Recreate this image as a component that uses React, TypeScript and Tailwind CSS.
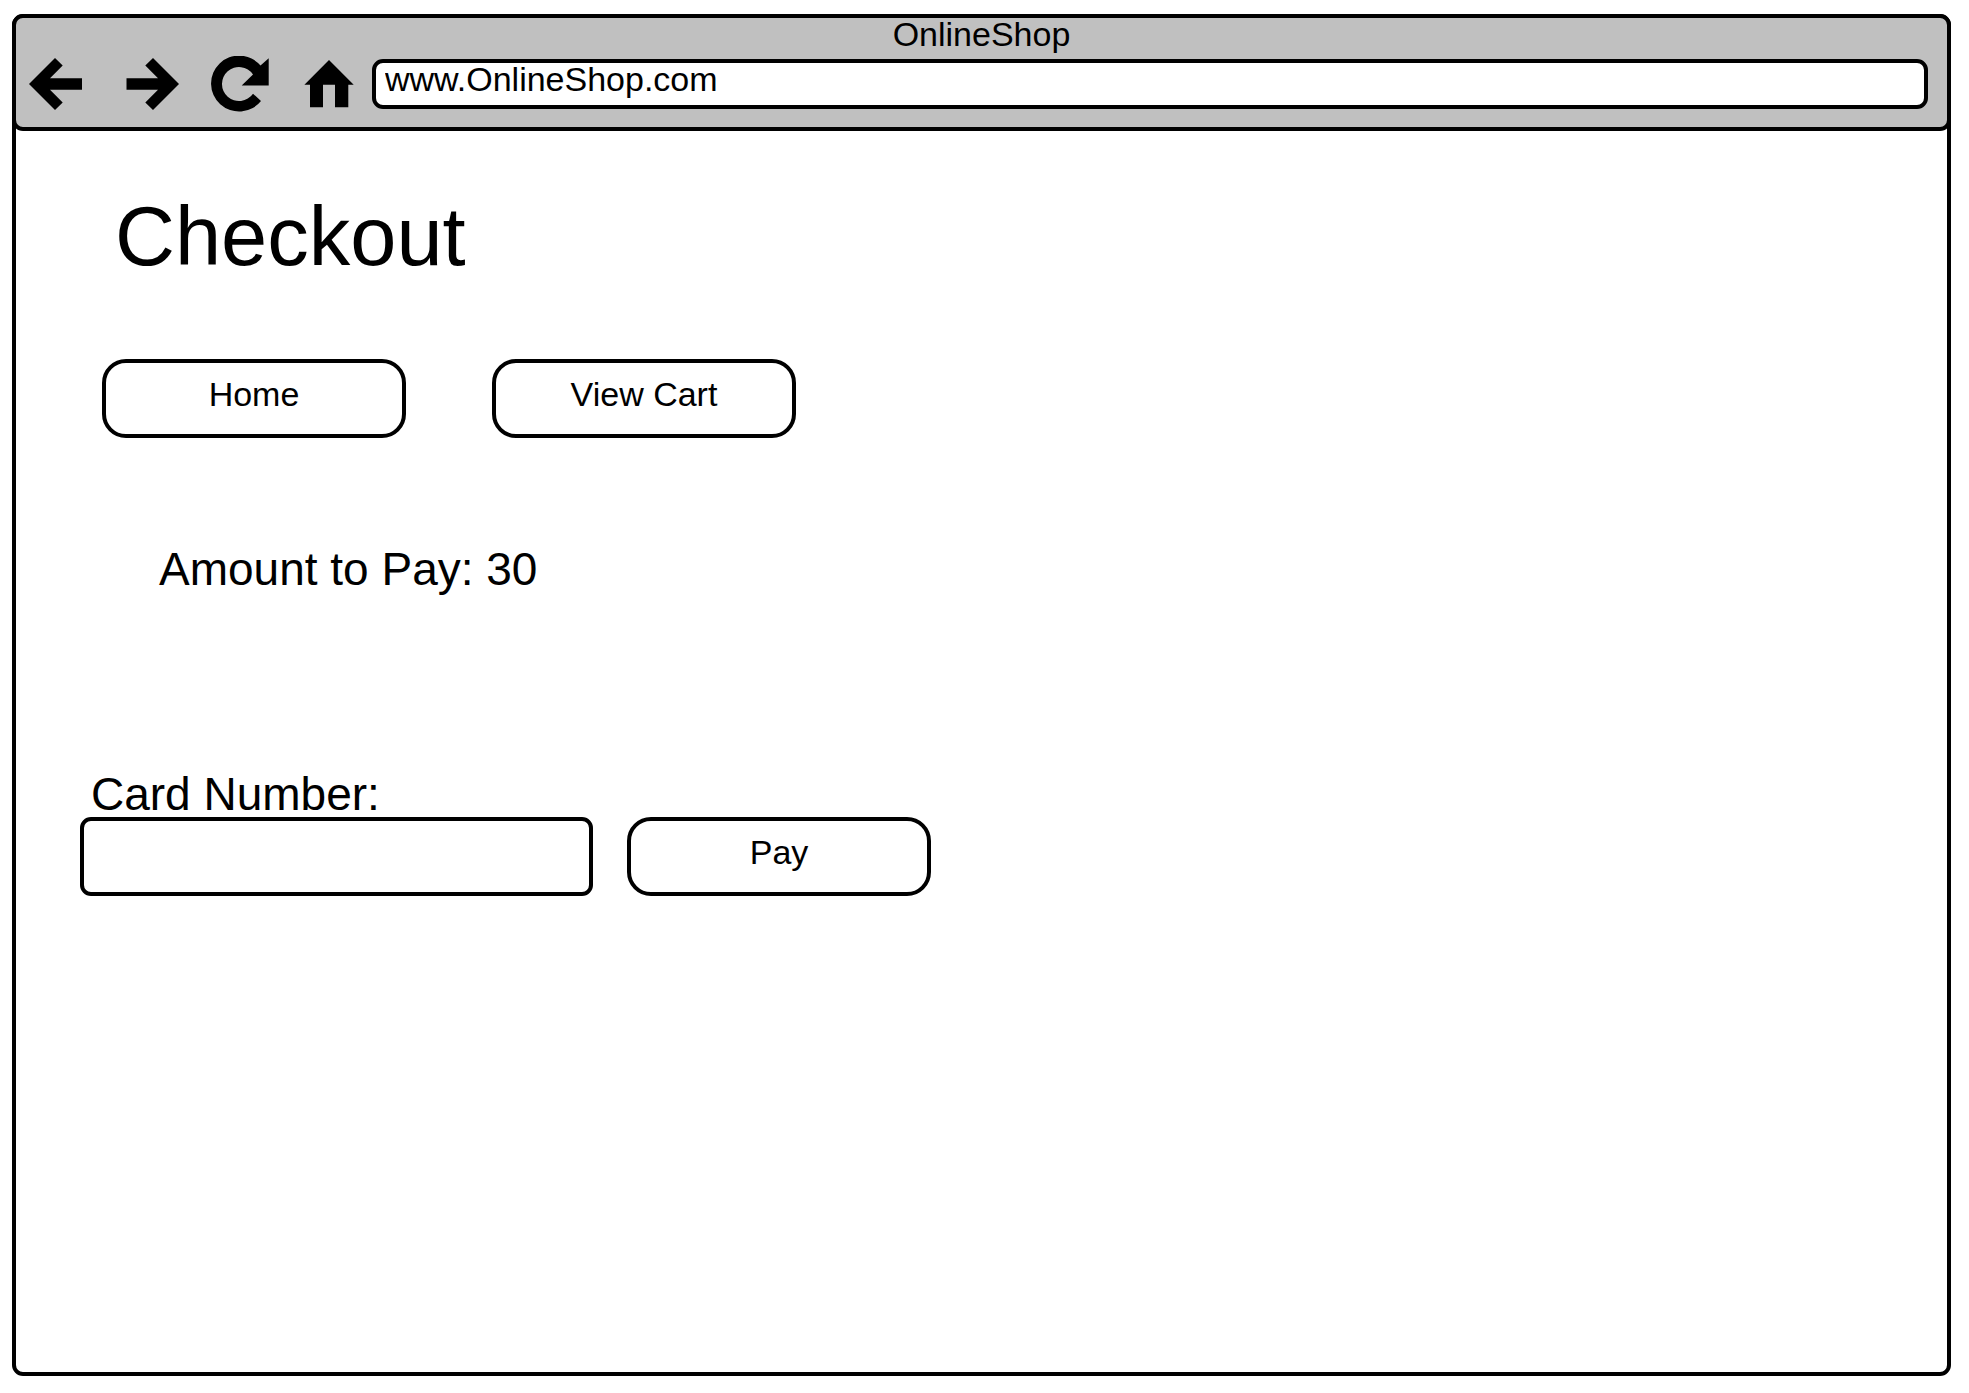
import type { ReactNode } from "react";

function IconButton({ label, children }: { label: string; children: ReactNode }) {
  return (
    <button type="button" aria-label={label} className="shrink-0 cursor-pointer">
      {children}
    </button>
  );
}

function BackIcon() {
  return (
    <svg width="53" height="52" viewBox="0 0 53 52" className="block fill-black">
      <path d="M0 26 26 0 33.7 7.5 21 20.3H53V31.7H21L33.7 44.5 26 52Z" />
    </svg>
  );
}

function ForwardIcon() {
  return (
    <svg width="53" height="52" viewBox="0 0 53 52" className="block fill-black">
      <path d="M53 26 27 0 19.3 7.5 32 20.3H.5V31.7H32L19.3 44.5 27 52Z" />
    </svg>
  );
}

function ReloadIcon() {
  return (
    <svg width="58" height="56" viewBox="0 0 58 56" className="block fill-black">
      <path d="M49.5 9.6 57.7 2.3V29.5H30.7L42 18.5A17 17 0 1 0 42 37.7L50 45A28 28 0 1 1 49.5 9.6Z" />
    </svg>
  );
}

function HomeIcon() {
  return (
    <svg width="50" height="48" viewBox="0 0 50 48" className="block fill-black">
      <path d="M25 0 49.7 24.8H44.3V47.3H31V24.8H19V47.3H6V24.8H.4Z" />
    </svg>
  );
}

function ActionButton({ type = "button", children }: { type?: "button" | "submit"; children: ReactNode }) {
  return (
    <button
      type={type}
      className="h-[79px] w-[304px] cursor-pointer rounded-[24px] border-4 border-black bg-white pb-[10px] text-[34px] leading-[38px]"
    >
      {children}
    </button>
  );
}

export default function App() {
  return (
    <div className="flex min-h-screen flex-col bg-white pt-[14px] pr-[18px] pb-[17px] pl-3 font-['Liberation_Sans',Arial,sans-serif] text-black">
      <div className="flex grow flex-col rounded-[11px] border-4 border-black">
        <header className="-mx-1 -mt-1 rounded-[11px] border-4 border-black bg-[#c0c0c0] pb-[15px]">
          <div className="mb-[6px] text-center text-[34px] leading-8">OnlineShop</div>
          <nav aria-label="Browser" className="flex items-center pr-[19px] pl-[13px]">
            <div className="flex items-center gap-11">
              <IconButton label="Back">
                <BackIcon />
              </IconButton>
              <IconButton label="Forward">
                <ForwardIcon />
              </IconButton>
            </div>
            <div className="ml-8 flex items-center gap-[35px]">
              <IconButton label="Reload">
                <ReloadIcon />
              </IconButton>
              <IconButton label="Browser home">
                <HomeIcon />
              </IconButton>
            </div>
            <input
              type="text"
              aria-label="Address"
              defaultValue="www.OnlineShop.com"
              className="ml-[18px] h-[50px] min-w-0 grow rounded-[11px] border-4 border-black bg-white px-[9px] pb-[10px] text-[34px] leading-8"
            />
          </nav>
        </header>

        <main className="px-16 pt-16 pb-16">
          <h1 className="ml-[35px] text-[83px] leading-[83px]">Checkout</h1>

          <nav aria-label="Shop" className="mt-[81px] ml-[22px] flex gap-[86px]">
            <ActionButton>Home</ActionButton>
            <ActionButton>View Cart</ActionButton>
          </nav>

          <p className="mt-[108px] ml-[79px] text-[46px] leading-[46px]">Amount to Pay: 30</p>

          <form className="mt-[179px]" onSubmit={(e) => e.preventDefault()}>
            <label htmlFor="card-number" className="ml-[11px] block text-[46px] leading-[46px]">
              Card Number:
            </label>
            <div className="flex gap-[34px]">
              <input
                id="card-number"
                type="text"
                inputMode="numeric"
                className="h-[79px] w-[513px] rounded-[11px] border-4 border-black bg-white px-3 text-[34px]"
              />
              <ActionButton type="submit">Pay</ActionButton>
            </div>
          </form>
        </main>
      </div>
    </div>
  );
}
